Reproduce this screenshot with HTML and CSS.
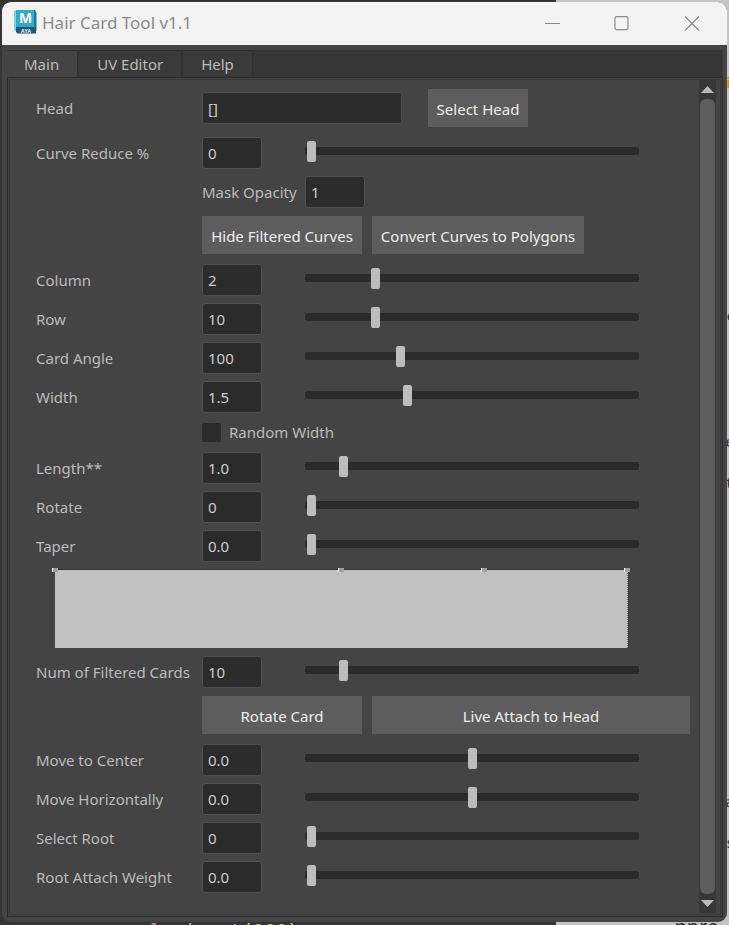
FILE: index.html
```html
<!DOCTYPE html>
<html lang="en">
<head>
<meta charset="utf-8">
<title>Hair Card Tool v1.1</title>
<link rel="stylesheet" href="styles.css">
</head>
<body>
<div class="backdrop" aria-hidden="true">
  <span class="code">l  <b>input</b><em>(100)</em></span>
  <span class="doc">npro</span>
  <span class="edge orange">i</span>
  <span class="edge c">c</span>
  <span class="edge e">e</span>
  <span class="edge t">t</span>
  <span class="edge a">a</span>
  <span class="edge s">s</span>
</div>
<div class="window">
  <header class="titlebar">
    <svg class="app-icon" width="23" height="26" viewBox="0 0 23 26" aria-hidden="true">
      <path d="M3 1h18l1.500 3v18H3z" fill="#1a7c93"/>
      <path d="M0 2l3-1v22l-3-2z" fill="#7fd0e2"/>
      <path d="M2 1h18v17H2z" fill="#35a9c6"/>
      <path d="M2 18h20v6.500H3.500L2 23z" fill="#1d5a78"/>
      <text x="11.500" y="13.500" class="icon-letter">M</text>
      <text x="12" y="23.500" class="icon-caption">AYA</text>
    </svg>
    <h1 class="title">Hair Card Tool v1.1</h1>
    <div class="window-controls">
      <button type="button" aria-label="Minimize"><svg width="16" height="16" viewBox="0 0 16 16"><path d="M1 7.500h15"/></svg></button>
      <button type="button" aria-label="Maximize"><svg width="16" height="16" viewBox="0 0 16 16"><rect x="1" y="0.600" width="13" height="13" rx="1.500"/></svg></button>
      <button type="button" aria-label="Close"><svg width="16" height="16" viewBox="0 0 16 16"><path d="M1 0.500l14 14M15 0.500L1 14.500"/></svg></button>
    </div>
  </header>
  <div class="content">
    <nav class="tabs" role="tablist">
      <button type="button" role="tab" class="tab active" aria-selected="true">Main</button>
      <button type="button" role="tab" class="tab">UV Editor</button>
      <button type="button" role="tab" class="tab">Help</button>
    </nav>
    <main class="panel">
      <form class="form">
        <div class="row tall">
          <label for="head">Head</label>
          <div class="head-group"><input class="field" id="head" type="text" value="[]"><button type="button" class="btn">Select Head</button></div>
        </div>
        <div class="row">
          <label for="reduce">Curve Reduce %</label><input class="field" id="reduce" type="text" value="0">
          <input class="slider" type="range" aria-label="Curve Reduce %" step="any" value="0">
        </div>
        <div class="row">
          <label class="mask-label" for="mask">Mask Opacity</label><input class="field mask" id="mask" type="text" value="1">
        </div>
        <div class="row tall">
          <div class="actions"><button type="button" class="btn">Hide Filtered Curves</button><button type="button" class="btn convert">Convert Curves to Polygons</button></div>
        </div>
        <div class="row">
          <label for="column">Column</label><input class="field" id="column" type="text" value="2">
          <input class="slider" type="range" aria-label="Column" step="any" value="20">
        </div>
        <div class="row">
          <label for="rows">Row</label><input class="field" id="rows" type="text" value="10">
          <input class="slider" type="range" aria-label="Row" step="any" value="20">
        </div>
        <div class="row">
          <label for="angle">Card Angle</label><input class="field" id="angle" type="text" value="100">
          <input class="slider" type="range" aria-label="Card Angle" max="360" step="any" value="100">
        </div>
        <div class="row">
          <label for="width">Width</label><input class="field" id="width" type="text" value="1.5">
          <input class="slider" type="range" aria-label="Width" max="5" step="any" value="1.5">
        </div>
        <div class="row short">
          <label class="check"><input type="checkbox">Random Width</label>
        </div>
        <div class="row">
          <label for="length">Length**</label><input class="field" id="length" type="text" value="1.0">
          <input class="slider" type="range" aria-label="Length" max="10" step="any" value="1">
        </div>
        <div class="row">
          <label for="rotate">Rotate</label><input class="field" id="rotate" type="text" value="0">
          <input class="slider" type="range" aria-label="Rotate" step="any" value="0">
        </div>
        <div class="row">
          <label for="taper">Taper</label><input class="field" id="taper" type="text" value="0.0">
          <input class="slider" type="range" aria-label="Taper" step="any" value="0">
        </div>
        <div class="curve" role="img" aria-label="Taper curve">
          <i class="point start"></i><i class="point half"></i><i class="point three-quarters"></i><i class="point end"></i>
        </div>
        <div class="row">
          <label for="cards">Num of Filtered Cards</label><input class="field" id="cards" type="text" value="10">
          <input class="slider" type="range" aria-label="Num of Filtered Cards" step="any" value="10">
        </div>
        <div class="row tall">
          <div class="actions"><button type="button" class="btn">Rotate Card</button><button type="button" class="btn">Live Attach to Head</button></div>
        </div>
        <div class="row">
          <label for="center">Move to Center</label><input class="field" id="center" type="text" value="0.0">
          <input class="slider" type="range" aria-label="Move to Center" step="any" value="50">
        </div>
        <div class="row">
          <label for="horizontal">Move Horizontally</label><input class="field" id="horizontal" type="text" value="0.0">
          <input class="slider" type="range" aria-label="Move Horizontally" step="any" value="50">
        </div>
        <div class="row">
          <label for="root">Select Root</label><input class="field" id="root" type="text" value="0">
          <input class="slider" type="range" aria-label="Select Root" step="any" value="0">
        </div>
        <div class="row">
          <label for="weight">Root Attach Weight</label><input class="field" id="weight" type="text" value="0.0">
          <input class="slider" type="range" aria-label="Root Attach Weight" step="any" value="0">
        </div>
      </form>
      <div class="scrollbar">
        <button type="button" aria-label="Scroll up"><svg width="13" height="7" viewBox="0 0 13 7"><path d="M0 7L6.500 0L13 7z"/></svg></button>
        <div class="scroll-thumb"></div>
        <button type="button" aria-label="Scroll down"><svg width="13" height="7" viewBox="0 0 13 7"><path d="M0 0L6.500 7L13 0z"/></svg></button>
      </div>
    </main>
  </div>
</div>
</body>
</html>
```
FILE: styles.css
```css
* { box-sizing: border-box; }

body {
  margin: 0;
  min-height: 100vh;
  padding: 2px 2px 3px;
  display: flex;
  position: relative;
  background: linear-gradient(to right, #353535 556px, #c4c4c4 556px);
  color: #bbb;
  font: 15px/20px "Noto Sans", "Open Sans", sans-serif;
}

button, input { font: inherit; color: inherit; margin: 0; }
button { border: 0; padding: 0; background: none; }

/* Editor and document windows behind the tool */
.backdrop { position: absolute; inset: 0; overflow: hidden; }
.backdrop span { position: absolute; white-space: pre; }
.backdrop .code { left: 150px; bottom: -17px; font: 19px/22px "DejaVu Sans Mono", monospace; color: #c586a0; }
.code b { font-weight: 400; color: #9cc4d8; }
.code em { font-style: normal; color: #c8d878; }
.backdrop .doc { right: 10px; bottom: -12px; font-size: 20px; color: #333; }
.backdrop .edge { right: -5px; color: #333; }
.backdrop .orange { top: 72px; right: -2px; color: #d08a30; font-weight: 700; }
.backdrop .c { top: 305px; }
.backdrop .e { top: 431px; }
.backdrop .t { top: 472px; right: -3px; }
.backdrop .a { top: 791px; }
.backdrop .s { top: 832px; }

.window {
  flex: 1;
  display: flex;
  flex-direction: column;
  position: relative;
  border-radius: 9px;
  overflow: hidden;
  background: #444;
}

.titlebar {
  display: flex;
  align-items: center;
  height: 43px;
  padding-left: 12px;
  background: #f3f3f3;
  color: #8a8a8a;
}
.app-icon { margin-bottom: 3px; }
.icon-letter { font: 700 14px "Open Sans", sans-serif; fill: #fff; text-anchor: middle; }
.icon-caption { font: 700 5px "Open Sans", sans-serif; fill: #fff; text-anchor: middle; }
.title { flex: 1; margin: 0 0 2px 5px; font-size: 17px; font-weight: 400; }
.window-controls { display: flex; }
.window-controls button { width: 70px; height: 40px; display: grid; place-items: center; }
.window-controls svg { fill: none; stroke: #8a8a8a; stroke-width: 1.2; }

.content { flex: 1; display: flex; flex-direction: column; padding: 5px 4px 5px 5px; }

.tabs { display: flex; gap: 2px; height: 27px; background: #373737; }
.tab {
  padding: 0 18px 0 17px;
  border: 1px solid #303030;
  border-width: 1px 1px 0 0;
  background: #3a3a3a;
}
.tab.active { background: #444; }

.panel {
  flex: 1;
  display: flex;
  justify-content: space-between;
  padding: 2px 6px 3px 0;
  border: 1px solid #2b2b2b;
  outline: 1px solid #383838;
  outline-offset: -3px;
}

.form { flex: 1; display: flex; flex-direction: column; gap: 8px; padding: 8px 9px 0 28px; }
.row {
  display: grid;
  grid-template-columns: 166px 60px 1fr;
  height: 31px;
  align-items: center;
}
.row.tall { height: 40px; margin-bottom: 1px; }
.row.short { height: 24px; }

.field {
  width: 100%;
  height: 32px;
  padding: 0 5px;
  border: 1px solid #505050;
  border-radius: 3px;
  background: #2b2b2b;
  color: #ccc;
}
.btn { height: 38px; padding: 2px 0 0; background: #5d5d5d; color: #eee; white-space: nowrap; }

.head-group { grid-column: 2 / -1; display: flex; align-items: center; gap: 26px; }
.head-group .field { width: 200px; }
.head-group .btn { width: 100px; }
.actions { grid-column: 2 / -1; display: grid; grid-template-columns: 160px 1fr; gap: 10px; }
.convert { width: 212px; }

.slider {
  grid-column: 3;
  align-self: start;
  height: 8px;
  margin: 10px 51px 0 43px;
  appearance: none;
  background: none;
}
.slider::-webkit-slider-runnable-track { height: 8px; border-radius: 2px; background: #2b2b2b; }
.slider::-webkit-slider-thumb {
  appearance: none;
  width: 13px;
  height: 21px;
  margin-top: -6px;
  border: solid transparent;
  border-width: 0 2px;
  border-radius: 4px / 2px;
  background: #bdbdbd padding-box;
}

.mask-label { grid-column: 2 / 4; grid-row: 1; }
.mask { grid-column: 3; grid-row: 1; width: 60px; margin-left: 43px; }

.check { grid-column: 2 / -1; display: flex; align-items: center; gap: 8px; }
.check input { appearance: none; width: 19px; height: 19px; border-radius: 2px; background: #2b2b2b; }

.curve {
  position: relative;
  height: 79px;
  margin: 0 62px 0 19px;
  border-top: 1px solid #333;
  border-right: 1px dotted #666;
  background: #c1c1c1;
}
.point {
  position: absolute;
  top: -2px;
  width: 6px;
  height: 4px;
  margin-left: -3px;
  border-left: 1px solid #fff;
  background: #a0a0a0;
}
.start { left: 0; }
.half { left: 50%; }
.three-quarters { left: 75%; }
.end { left: 100%; }

.scrollbar { width: 17px; display: flex; flex-direction: column; background: #373737; border-radius: 2px; }
.scrollbar button { height: 19px; display: grid; place-items: center; fill: #bbb; }
.scroll-thumb { flex: 1; margin: 0 1px; border-radius: 6px; background: #5d5d5d; }
```
